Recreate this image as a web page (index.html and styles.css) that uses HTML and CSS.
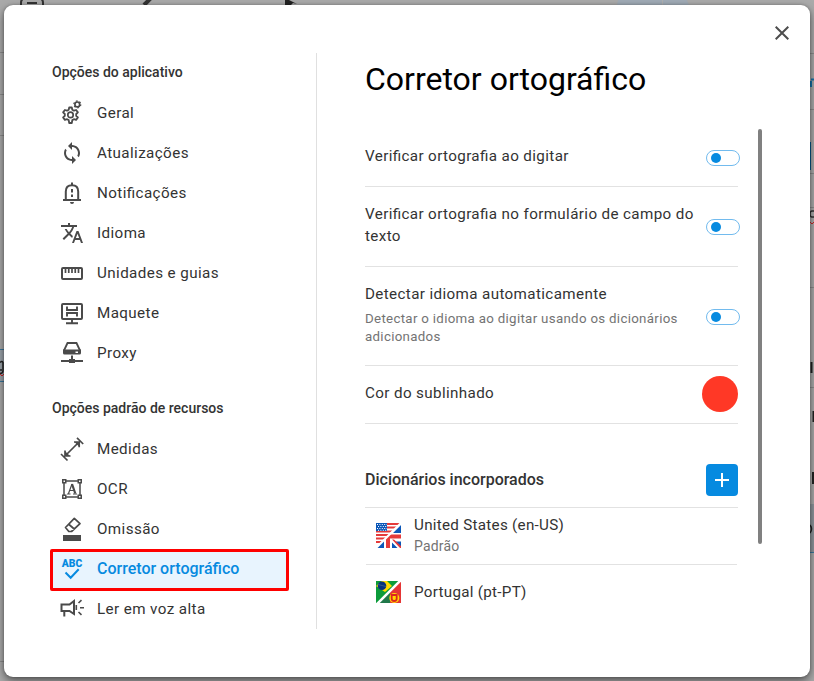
FILE: index.html
```html
<!DOCTYPE html>
<html lang="pt">
<head>
<meta charset="utf-8">
<title>Corretor ortográfico</title>
<link rel="stylesheet" href="styles.css">
</head>
<body>
<svg class="backdrop" width="814" height="681" viewBox="0 0 814 681" aria-hidden="true">
  <path d="M0 52.500h4M0 94.500h4M0 135.500h4M0 661.500h4M810 53.500h4M810 109.500h4M810 173.500h4M810 207.500h4M810 287.500h4M810 387.500h4" stroke="#8c8c8c"/>
  <path d="M617 5a10 10 0 0 1 3-7h66l3 7z" fill="#a0abb6"/>
  <path d="M662.500 0v5" stroke="#b0b0b0"/>
  <path d="M21 5V3q0-5 5-5h12q5 0 5 5v2M27 3h10" fill="none" stroke="#333" stroke-width="2"/>
  <path d="M144 5l7-7" stroke="#333" stroke-width="4"/>
  <path d="M285 0h4l8 4-4-1-2 2h-6z" fill="#222"/>
  <path d="M0 350h4v31H0z" fill="#9ba3aa"/>
  <path d="M0 349.500h4M0 381.500h4" stroke="#39779d"/>
  <path d="M0 362.500q2-2 3 0v8q0 3-3 3M0 370h2" fill="none" stroke="#222" stroke-width="1.500"/>
  <path d="M0 374l2 2 2-2" fill="none" stroke="#c22" />
  <path d="M811 87v-6M811 79.500h3" fill="none" stroke="#1471aa" stroke-width="2"/>
  <path d="M810 142h1v28h-1z" fill="#04598f"/>
  <path d="M814 211h-2q-2 0-2 3t2 3h2" fill="none" stroke="#333" stroke-width="1.500"/>
  <path d="M810 222l2 2 2-2" fill="none" stroke="#c22"/>
  <path d="M811.500 362v11M813.500 411v11M813 472v12" stroke="#222" stroke-width="2"/>
  <path d="M810 504h4v48h-4z" fill="#8f979d"/>
  <path d="M810 552.500h4" stroke="#39779d"/>
  <path d="M810 525q3 4 0 8" fill="none" stroke="#222" stroke-width="1.500"/>
</svg>

<div class="dialog">
  <nav class="sidebar">
    <h2 class="group">Opções do aplicativo</h2>
    <a class="item"><svg class="icon" viewBox="0 0 24 24"><g fill="none" stroke="currentColor"><path stroke-width="1.800" stroke-linejoin="round" d="M9.200 6.500h2.600l.5 2.300 1.600.9 2.200-.7 1.800 2.400-1.700 1.600v1.900l1.700 1.600-1.800 2.400-2.200-.7-1.600.9-.5 2.900H9.200l-.5-2.900-1.600-.9-2.200.7-1.800-2.400 1.700-1.600v-1.900l-1.700-1.600L4.900 9l2.200.7 1.600-.9z"/><circle cx="10.500" cy="13.900" r="2.700" stroke-width="1.700"/><circle cx="17.300" cy="3.400" r="2.400" stroke-width="1.700"/><circle cx="17.300" cy="3.400" r="3.500" stroke-width="1.200" stroke-dasharray="1.700 1.960"/></g></svg><span>Geral</span></a>
    <a class="item"><svg class="icon" viewBox="0 0 24 24"><path fill="currentColor" d="M12 4V1L8 5l4 4V6c3.310 0 6 2.690 6 6 0 1.010-.25 1.970-.7 2.800l1.460 1.460C19.540 15.030 20 13.570 20 12c0-4.420-3.580-8-8-8zm0 14c-3.310 0-6-2.690-6-6 0-1.010.25-1.970.7-2.800L5.240 7.740C4.460 8.970 4 10.430 4 12c0 4.420 3.580 8 8 8v3l4-4-4-4v3z"/></svg><span>Atualizações</span></a>
    <a class="item"><svg class="icon" viewBox="0 0 24 24"><path fill="none" stroke="currentColor" stroke-width="2" d="M3 19h18M5.800 18.500V10.500q0-6.200 6.200-6.200t6.200 6.200v8M12 4V1.500M12 8v3.500M12 13.500v2.500"/><path fill="currentColor" d="M10 21h4q0 2-2 2t-2-2z"/></svg><span>Notificações</span></a>
    <a class="item"><svg class="icon" viewBox="0 0 24 24"><path fill="currentColor" d="M12.870 15.070l-2.540-2.510.03-.03c1.740-1.940 2.980-4.170 3.710-6.530H17V4h-7V2H8v2H1v1.990h11.170C11.500 7.920 10.440 9.750 9 11.350 8.070 10.320 7.300 9.190 6.690 8h-2c.73 1.630 1.730 3.170 2.980 4.560l-5.090 5.020L4 19l5-5 3.110 3.110.76-2.040zM18.500 10h-2L12 22h2l1.120-3h4.750L21 22h2l-4.500-12zm-2.620 7l1.620-4.330L19.120 17h-3.240z"/></svg><span>Idioma</span></a>
    <a class="item"><svg class="icon" viewBox="0 0 24 24"><path fill="none" stroke="currentColor" stroke-width="2" d="M3 7h18q1 0 1 1v9q0 1-1 1H3q-1 0-1-1V8q0-1 1-1z"/><path stroke="currentColor" stroke-width="1.700" d="M5.500 8v4M8.750 8v4M12 8v4M15.250 8v4M18.500 8v4"/></svg><span>Unidades e guias</span></a>
    <a class="item"><svg class="icon" viewBox="0 0 24 24"><g fill="none" stroke="currentColor"><rect x="2" y="3" width="20" height="15" rx="1" stroke-width="2"/><path stroke-width="1.900" d="M7 5.500v3.500h10V5.500M7 15.500v-3.500h10v3.500M12 18v4M6 22.300h12"/></g></svg><span>Maquete</span></a>
    <a class="item"><svg class="icon" viewBox="0 0 24 24"><path fill="none" stroke="currentColor" stroke-width="1.800" d="M4 9.500L7.500 2h9L20 9.500"/><path fill="currentColor" fill-rule="evenodd" d="M3 8.500h18V12q0 1.500-1.500 1.500h-15Q3 13.500 3 12zm12.500 2V12H18v-1.500zM11 14.500h2v3.500h2v1h8v2h-8v1H9v-1H1v-2h8v-1h2z"/></svg><span>Proxy</span></a>

    <h2 class="group group-second">Opções padrão de recursos</h2>
    <a class="item"><svg class="icon" viewBox="0 0 24 24"><path fill="none" stroke="currentColor" stroke-width="1.700" d="M6.500 17.500L18 6M1 17l6.500 6.500M17 .8L23.200 7M5 13.500V19h5.500M14 5h5.200v5.200"/><path fill="currentColor" d="M5 14l5 5H5zM14.500 5h4.700v4.700z"/></svg><span>Medidas</span></a>
    <a class="item"><svg class="icon" viewBox="0 0 24 24"><g fill="none" stroke="currentColor" stroke-width="1.500"><path d="M6 4h12M6 20h12M4 6v12M20 6v12"/><path d="M2.750 2.750h3v3h-3zM18.250 2.750h3v3h-3zM2.750 18.250h3v3h-3zM18.250 18.250h3v3h-3z"/><path stroke-width="1.200" d="M7 17h3.500M13 17h4M8.500 16.500L12 7M9.800 13.500h4"/><path stroke-width="2.200" d="M12 7l3.300 9.500"/></g></svg><span>OCR</span></a>
    <a class="item"><svg class="icon" viewBox="0 0 24 24"><path fill="none" stroke="currentColor" stroke-width="1.700" stroke-linejoin="round" d="M5.500 10.500l8.800-9.200 5.700 5.400-8.500 7.800H8.800l-3.300-4zM9 7.500l5.800 5"/><path fill="currentColor" d="M3 18h18v6H3z"/></svg><span>Omissão</span></a>
    <a class="item item-active"><svg class="icon" viewBox="0 0 24 24"><text class="abc" x="1.800" y="10.300" textLength="20.500" lengthAdjust="spacingAndGlyphs">ABC</text><path fill="none" stroke="currentColor" stroke-width="2" d="M5.500 15.500l5.200 5.200 8-8.500"/></svg><span>Corretor ortográfico</span></a>
    <a class="item"><svg class="icon" viewBox="0 0 24 24"><g fill="none" stroke="currentColor" stroke-width="2"><path d="M14 4v13l-4.500-3H1.500V7.500h8zM4.300 14v5.500"/><path stroke-width="1.600" d="M16.300 8v5M18.500 6l3-2.800M20 10.700H24M18.500 15l3 2.800"/></g></svg><span>Ler em voz alta</span></a>
  </nav>

  <main class="panel">
    <h1 class="title">Corretor ortográfico</h1>
    <section class="options">
      <div class="row row-typing"><p class="label">Verificar ortografia ao digitar</p><span class="toggle"></span></div>
      <div class="row row-form"><p class="label">Verificar ortografia no formulário de campo do texto</p><span class="toggle"></span></div>
      <div class="row row-detect"><div><p class="label">Detectar idioma automaticamente</p><p class="note">Detectar o idioma ao digitar usando os dicionários adicionados</p></div><span class="toggle"></span></div>
      <div class="row row-color"><p class="label">Cor do sublinhado</p><span class="swatch"></span></div>
      <div class="row row-dicts"><h3 class="subtitle">Dicionários incorporados</h3><button class="add" aria-label="Adicionar"><svg width="14" height="14" viewBox="0 0 14 14"><path d="M7 0v14M0 7h14" stroke="#fff" stroke-width="2"/></svg></button></div>
      <div class="dict dict-us">
        <svg class="flag" width="25" height="25" viewBox="0 0 25 25"><path fill="#fff" d="M0 0h25v25H0z"/><path d="M0 1h24M0 4.500h22M0 8.500h18M0 12h14M0 15.500h10M0 19h6" stroke="#e53a3a" stroke-width="2"/><path fill="#0b57b8" d="M0 0h11v8H0z"/><path d="M1 1.500h10M2 3.500h9M1 5.500h10M2 7.300h9" stroke="#fff" stroke-width="1" stroke-dasharray="1 1.400"/><path fill="#fff" d="M25 0v25H0z"/><path fill="#0b57b8" d="M25 2v8h-8zM0 25l8-8v8zM16 25v-5.500l5.500 5.500zM25 18.500V24l-5.500-5.500z"/><path fill="#e53a3a" d="M10 25V14.500l3-3h12v4H14V25zM16 16.500h2l7 6.500v2h-1z"/><path d="M26-1L-1 26" stroke="#fff" stroke-width="2.200"/></svg>
        <div><p class="label">United States (en-US)</p><p class="status">Padrão</p></div>
      </div>
      <div class="dict dict-pt">
        <svg class="flag" width="25" height="22" viewBox="0 0 25 22"><path fill="#0b9b3a" d="M0 0h25v22H0z"/><path fill="#ffda00" d="M0 5L6 0h5l5 5-7 6z"/><circle cx="6" cy="4.800" r="4.300" fill="#06317e"/><path d="M2 3.500l8 2" stroke="#466f86" stroke-width=".7"/><path fill="#e53535" d="M25 0v22H13V12z"/><path fill="#20784a" d="M14 11v11H3z"/><circle cx="18.300" cy="17" r="5" fill="#ffda00"/><path d="M15.700 14h5v3.500q0 2.500-2.500 2.500t-2.500-2.500z" fill="#ffda00" stroke="#dd251f" stroke-width="1.800"/><path d="M25-1L0 24" stroke="#fff" stroke-width="2.500"/></svg>
        <p class="label">Portugal (pt-PT)</p>
      </div>
    </section>
  </main>
  <div class="side">
    <button class="close" aria-label="Fechar"><svg width="14" height="14" viewBox="0 0 14 14"><path d="M.7.7l12.600 12.600M13.300.7L.7 13.300" stroke="#4d4d4d" stroke-width="2"/></svg></button>
    <div class="scrollbar"></div>
  </div>
</div>
</body>
</html>
```

FILE: styles.css
```css
* { box-sizing: border-box; }
body { margin: 0; width: 814px; height: 681px; overflow: hidden; background: #aaa; font-family: Roboto, "Liberation Sans", sans-serif; font-feature-settings: "liga" 1; color: #333; }
h1, h2, h3, p { margin: 0; }
button { border: 0; padding: 0; background: none; display: grid; place-items: center; }
.backdrop { position: absolute; left: 0; top: 0; }
.dialog { position: relative; display: flex; margin: 5px 4px 4px; width: 806px; height: 672px; background: #fff; border-radius: 9px; box-shadow: 0 4px 10px rgba(0, 0, 0, .5), 0 0 3px rgba(0, 0, 0, .25); }

.sidebar { width: 267px; height: 576px; margin: 48px 0 0 46px; border-right: 1px solid #e0e0e0; }
.group { height: 40px; padding-left: 2px; font-size: 14px; line-height: 39px; font-weight: 500; white-space: nowrap; }
.group-second { height: 56px; line-height: 71px; }
.item { display: flex; align-items: center; gap: 13px; width: 239px; height: 40px; padding-left: 10px; font-size: 15.200px; letter-spacing: .4px; white-space: nowrap; }
.icon { width: 24px; height: 24px; color: #4a4a4a; overflow: visible; flex: none; }
.item-active { height: 42px; margin: 0 0 -2px; padding: 0 0 3px 7px; border: 3px solid #fe0000; border-radius: 2px; background: #e8f4fe; color: #068ae0; font-size: 16px; letter-spacing: 0; font-weight: 500; }
.item-active .icon { color: #068ae0; }
.abc { font: 900 10px Roboto, sans-serif; letter-spacing: 0; fill: currentColor; }

.panel { width: 375px; margin-left: 48px; }
.title { height: 125px; padding-top: 54px; font-size: 32px; line-height: 40px; font-weight: 400; color: #000; white-space: nowrap; }
.row { display: flex; justify-content: space-between; width: 373px; border-bottom: 1px solid #e2e2e2; }
.label { font-size: 15.200px; line-height: 22px; letter-spacing: .37px; }
.note { margin-top: 5px; font-size: 13.300px; line-height: 18px; letter-spacing: .31px; color: #737373; }
.toggle { flex: none; width: 34px; height: 16px; margin-right: -2px; padding: 2px 4px; border: 1px solid #72bbee; border-radius: 8px; }
.toggle::before { content: ""; display: block; width: 10px; height: 10px; border-radius: 50%; background: #068ae0; }
.row-typing { height: 57px; padding-top: 15px; }
.row-typing .toggle { margin-top: 5px; }
.row-form { height: 80px; padding-top: 16px; }
.row-form .toggle { margin-top: 16px; }
.row-detect { height: 99px; padding-top: 16px; }
.row-detect .toggle { margin-top: 26px; }
.row-color { height: 58px; padding-top: 10px; }
.row-color .label { padding-top: 6px; }
.swatch { width: 36px; height: 36px; border-radius: 50%; background: #ff3826; }
.row-dicts { height: 84px; padding-top: 40px; }
.subtitle { font-size: 16px; line-height: 32px; font-weight: 500; }
.add { width: 32px; height: 32px; border-radius: 4px; background: #068ae0; }
.dict { display: flex; gap: 13px; padding-left: 11px; }
.dict .label { letter-spacing: .28px; }
.dict-us { width: 371px; margin-left: 1px; padding-left: 10px; height: 57px; padding-top: 6px; border-bottom: 1px solid #e2e2e2; }
.dict-us .flag { margin-top: 9px; }
.dict-pt { padding-top: 16px; }
.flag { flex: none; }
.status { font-size: 14px; line-height: 20px; letter-spacing: .2px; color: #737373; }

.side { display: flex; flex-direction: column; width: 70px; }
.close { width: 14px; height: 14px; margin: 21px 0 0 35px; }
.scrollbar { width: 4px; height: 415px; margin: 89px 0 0 18px; border-radius: 2px; background: #808080; }
```
